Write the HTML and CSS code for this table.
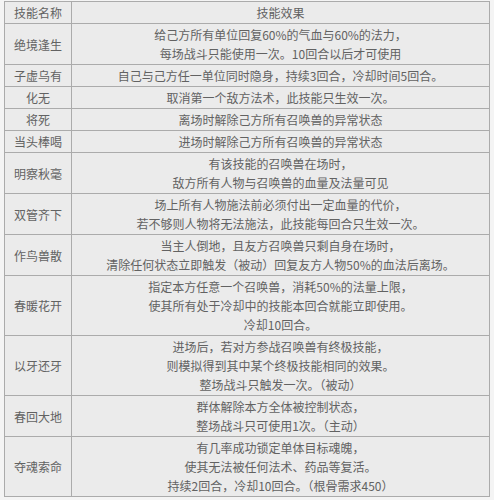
FILE: index.html
```html
<!DOCTYPE html>
<html lang="zh-CN">
<head>
<meta charset="utf-8">
<title>技能效果</title>
<link rel="stylesheet" href="styles.css">
</head>
<body>
<table class="skills">
  <tr><td class="name">技能名称</td><td class="effect">技能效果</td></tr>
  <tr><td class="name">绝境逢生</td><td class="effect">给己方所有单位回复60%的气血与60%的法力，<br>每场战斗只能使用一次。10回合以后才可使用</td></tr>
  <tr><td class="name">子虚乌有</td><td class="effect">自己与己方任一单位同时隐身，持续3回合，冷却时间5回合。</td></tr>
  <tr><td class="name">化无</td><td class="effect">取消第一个敌方法术，此技能只生效一次。</td></tr>
  <tr><td class="name">将死</td><td class="effect">离场时解除己方所有召唤兽的异常状态</td></tr>
  <tr><td class="name">当头棒喝</td><td class="effect">进场时解除己方所有召唤兽的异常状态</td></tr>
  <tr><td class="name">明察秋毫</td><td class="effect">有该技能的召唤兽在场时，<br>敌方所有人物与召唤兽的血量及法量可见</td></tr>
  <tr><td class="name">双管齐下</td><td class="effect">场上所有人物施法前必须付出一定血量的代价，<br>若不够则人物将无法施法，此技能每回合只生效一次。</td></tr>
  <tr><td class="name">作鸟兽散</td><td class="effect">当主人倒地，且友方召唤兽只剩自身在场时，<br>清除任何状态立即触发（被动）回复友方人物50%的血法后离场。</td></tr>
  <tr><td class="name">春暖花开</td><td class="effect">指定本方任意一个召唤兽，消耗50%的法量上限，<br>使其所有处于冷却中的技能本回合就能立即使用。<br>冷却10回合。</td></tr>
  <tr><td class="name">以牙还牙</td><td class="effect">进场后，若对方参战召唤兽有终极技能，<br>则模拟得到其中某个终极技能相同的效果。<br>整场战斗只触发一次。（被动）</td></tr>
  <tr><td class="name">春回大地</td><td class="effect">群体解除本方全体被控制状态，<br>整场战斗只可使用1次。（主动）</td></tr>
  <tr><td class="name">夺魂索命</td><td class="effect">有几率成功锁定单体目标魂魄，<br>使其无法被任何法术、药品等复活。<br>持续2回合，冷却10回合。（根骨需求450）</td></tr>
</table>
</body>
</html>
```

FILE: styles.css
```css
html, body {
  margin: 0;
  padding: 0;
  background: #f4f4f4;
}

body {
  padding: 1px 0 0 4px;
  font-family: "Noto Sans CJK SC", "Noto Sans", sans-serif;
  font-size: 12px;
  color: #626262;
}

.skills {
  border-collapse: collapse;
  width: 486px;
  background: #ebebeb;
  border: 1px solid #9a9a9a;
}

.skills td {
  border: 1px solid #ababab;
  padding: 1px 0;
  line-height: 19px;
  text-align: center;
  vertical-align: middle;
  white-space: nowrap;
}

.skills .name {
  width: 66px;
}

.skills .effect {
  letter-spacing: 0;
}
```
